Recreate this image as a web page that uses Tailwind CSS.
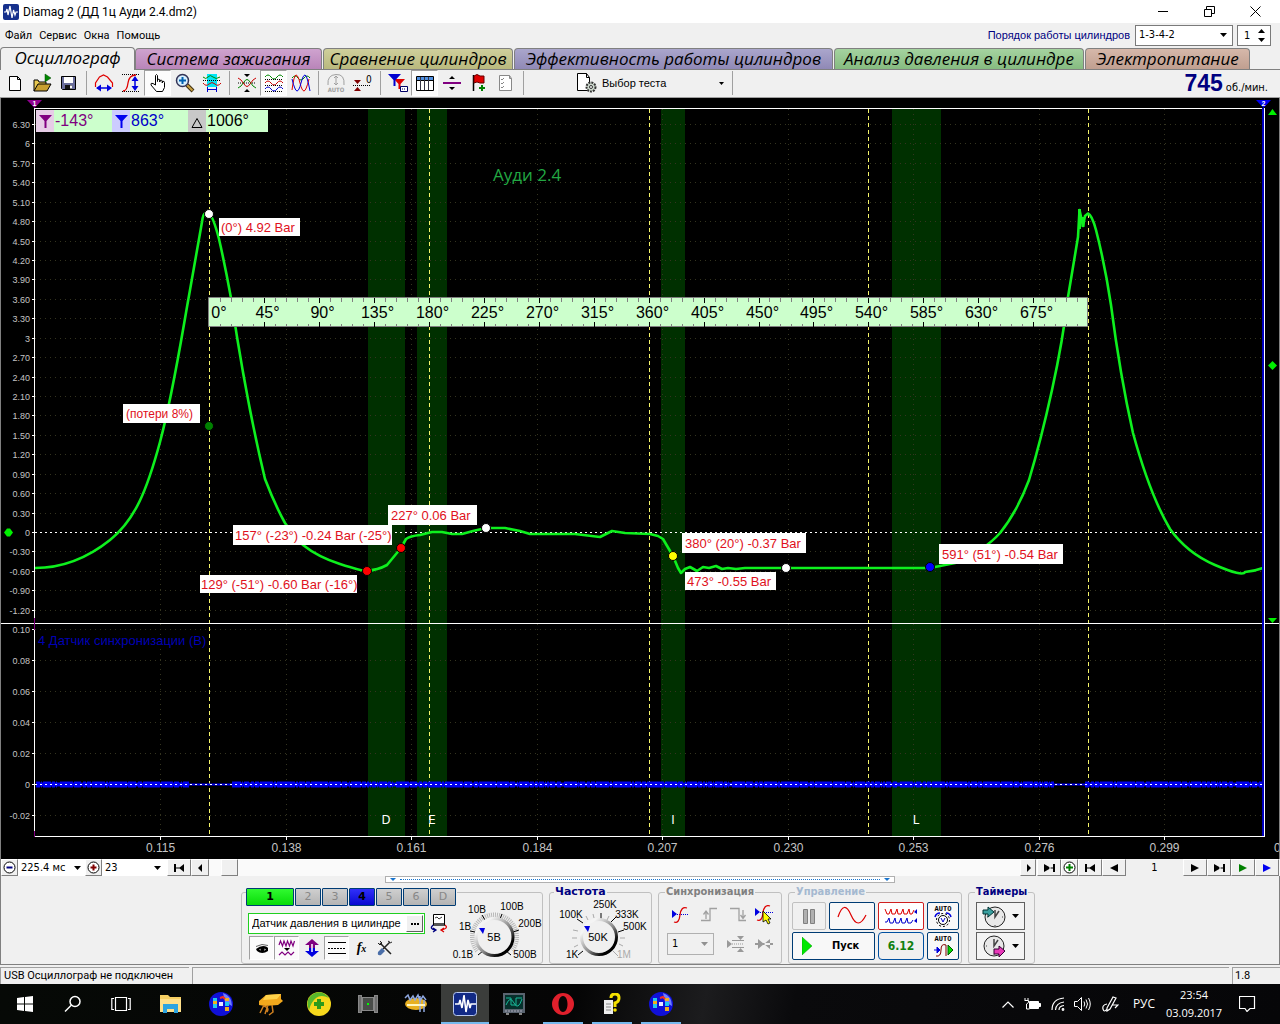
<!DOCTYPE html>
<html lang="ru">
<head>
<meta charset="utf-8">
<title>Diamag 2</title>
<script src="https://cdn.jsdelivr.net/npm/@tailwindcss/browser@4"></script>
</head>
<body class="min-h-screen flex flex-col bg-[#f0f0f0] text-black text-[11px] font-['DejaVu_Sans_Condensed','DejaVu_Sans',sans-serif] overflow-x-hidden">

<!-- title bar -->
<header class="flex items-center h-[23px] bg-white pl-[3px] font-['Roboto',sans-serif]">
  <svg class="w-4 h-4 shrink-0" viewBox="0 0 16 16"><rect width="16" height="16" rx="2" fill="#16308c"/><path d="M1 8h2l1-3 1 6 2-9 2 12 1.500-8 1.500 5 1-3h2" fill="none" stroke="#fff" stroke-width="1.200"/></svg>
  <h1 class="ml-1 text-xs leading-4">Diamag 2 (ДД 1ц Ауди 2.4.dm2)</h1>
  <div class="ml-auto mr-0.5 flex">
    <button class="w-[46px] h-[22px] grid place-items-center" aria-label="Свернуть"><svg width="11" height="11" viewBox="0 0 11 11"><path d="M0 5.500h10" stroke="#000"/></svg></button>
    <button class="w-[46px] h-[22px] grid place-items-center" aria-label="Развернуть"><svg width="11" height="11" viewBox="0 0 11 11" fill="none" stroke="#000"><path d="M.5 3.500h7v7h-7zM2.500 3V.5h8v7H8"/></svg></button>
    <button class="w-[46px] h-[22px] grid place-items-center" aria-label="Закрыть"><svg width="11" height="11" viewBox="0 0 11 11"><path d="M.5.5l10 10M10.500.5l-10 10" stroke="#000"/></svg></button>
  </div>
</header>

<!-- menu -->
<div class="flex items-center h-6">
  <nav class="flex gap-[7px] pl-[5px] pt-0.5 font-['Roboto',sans-serif] text-[11px] leading-4">
    <a href="#">Файл</a><a href="#">Сервис</a><a href="#">Окна</a><a href="#">Помощь</a>
  </nav>
  <div class="ml-auto flex items-center pr-[9px]">
    <label for="order" class="text-[#000080] mr-[5px] font-['Liberation_Sans',sans-serif]">Порядок работы цилиндров</label>
    <div class="relative mr-1">
      <select id="order" class="appearance-none block w-[98px] h-[21px] bg-white border border-[#7a7a7a] pl-[3px] text-[11px]"><option>1-3-4-2</option></select>
      <svg class="absolute right-1.5 top-2 pointer-events-none" width="7" height="4" viewBox="0 0 7 4"><path d="M0 0h7L3.500 4z"/></svg>
    </div>
    <div class="relative">
      <input aria-label="Цилиндр" value="1" class="block w-[34px] h-[21px] bg-white border border-[#7a7a7a] pl-1.5 text-[11px]">
      <svg class="absolute right-1.5 top-1 pointer-events-none" width="7" height="13" viewBox="0 0 7 13"><path d="M0 4h7L3.500 0zM0 9h7L3.500 13z"/></svg>
    </div>
  </div>
</div>

<!-- mode tabs -->
<nav class="flex h-[23px] items-end border-b border-[#808080] font-['Open_Sans',sans-serif] italic text-[17px] leading-[20px] whitespace-nowrap text-center">
  <a href="#" class="w-[135px] h-[23px] -mb-px bg-[#f0f0f0] border border-b-0 border-[#808080] rounded-t-[4px]">Осциллограф</a>
  <a href="#" class="w-[187px] h-[21px] bg-[linear-gradient(#cfa3cf,#b985b9)] border border-b-0 border-[#808080] rounded-t-[4px]">Система зажигания</a>
  <a href="#" class="w-[190px] ml-px h-[21px] bg-[linear-gradient(#cfcf9c,#b9b97e)] border border-b-0 border-[#808080] rounded-t-[4px]">Сравнение цилиндров</a>
  <a href="#" class="w-[319px] ml-px h-[21px] bg-[linear-gradient(#aaa6cc,#9089b6)] border border-b-0 border-[#808080] rounded-t-[4px]">Эффективность работы цилиндров</a>
  <a href="#" class="w-[250px] ml-px h-[21px] bg-[linear-gradient(#a5d3a0,#86bb80)] border border-b-0 border-[#808080] rounded-t-[4px]">Анализ давления в цилиндре</a>
  <a href="#" class="w-[165px] ml-px h-[21px] bg-[linear-gradient(#d6b8aa,#c09f90)] border border-b-0 border-[#808080] rounded-t-[4px]">Электропитание</a>
</nav>

<!-- toolbar -->
<div class="flex items-start h-7 pl-px border-b border-[#a0a0a0]">
  <button class="w-[27px] h-[26px] grid place-items-center" aria-label="Новый"><svg width="20" height="20" viewBox="0 0 20 20"><path d="M4.500 3.500h8l3 3v11h-11zM12.500 3.500v3h3" fill="#fff" stroke="#000"/></svg></button>
  <button class="w-[27px] h-[26px] grid place-items-center" aria-label="Открыть"><svg width="20" height="20" viewBox="0 0 20 20"><path d="M2 18V7h4l1 2h7v3" fill="#e8c850" stroke="#000"/><path d="M2 18l4-7h13l-4 7z" fill="#c8a030" stroke="#000"/><path d="M13 1l6 4-6 4z" fill="#080" stroke="#040" stroke-width=".5"/></svg></button>
  <button class="w-[27px] h-[26px] grid place-items-center" aria-label="Сохранить"><svg width="20" height="20" viewBox="0 0 20 20"><path d="M2.500 3.500h14v13h-13l-1-1z" fill="#6a6e9c" stroke="#000"/><path d="M5 4h9v6H5z" fill="#fff"/><path d="M6 12h7v4H6z" fill="#111"/><path d="M11 12.500h2v3h-2z" fill="#fff"/></svg></button>
  <span class="w-2 h-[26px] grid place-items-center"><i class="block w-px h-6 bg-[#a0a0a0]"></i></span>
  <button class="w-[27px] h-[26px] grid place-items-center" aria-label="Период"><svg width="20" height="20" viewBox="0 0 20 20"><path d="M1.500 14V10l4-6 4-2 4 2 5 6v4" fill="none" stroke="#e00000" stroke-width="1.200"/><path d="M3 15h14" stroke="#0000e0" stroke-width="1.500"/><path d="M2 15l5-3.500v7zM18 15l-5-3.500v7z" fill="#0000e0"/></svg></button>
  <button class="w-[27px] h-[26px] grid place-items-center" aria-label="Амплитуда"><svg width="20" height="20" viewBox="0 0 20 20"><path d="M1 1.500h17M1 18.500h17" stroke="#000" stroke-dasharray="1 1"/><path d="M2 18q4 0 5-8t8-8" fill="none" stroke="#e00000" stroke-width="1.300"/><path d="M14 5v10" stroke="#0000e0" stroke-width="1.500"/><path d="M14 3l3.500 5h-7zM14 18l3.500-5h-7z" fill="#0000e0"/></svg></button>
  <button class="w-[27px] h-[26px] grid place-items-center bg-white/80 border border-t-[#a0a0a0] border-l-[#a0a0a0] border-r-white border-b-white" aria-label="Рука"><svg width="20" height="20" viewBox="0 0 20 20"><path d="M7.500 12V2.500q1-2 2 0v6V6.500q1.800-1 2.300.5v2V7.500q2-1 2.500.5v2-1.500q2.200-.8 2.200 1v5l-2 4h-6L3 12q-.5-2.500 2-1.500z" fill="#fff" stroke="#000"/></svg></button>
  <button class="w-[27px] h-[26px] grid place-items-center" aria-label="Лупа"><svg width="20" height="20" viewBox="0 0 20 20"><path d="M12 12l6 6" stroke="#403010" stroke-width="4"/><path d="M12 12l5.500 5.500" stroke="#c8a040" stroke-width="2"/><circle cx="7.500" cy="7.500" r="6" fill="#d8f0ff" stroke="#335" stroke-width="1.500"/><path d="M4 7.500h7M7.500 4v7" stroke="#0060b0" stroke-width="2"/></svg></button>
  <button class="w-[27px] h-[26px] grid place-items-center" aria-label="Выделение"><svg width="20" height="20" viewBox="0 0 20 20"><path d="M5 1h10v13H5z" fill="#00e5f5"/><path d="M1 4q3 3 5 0t5 0 7 0" fill="none" stroke="#080"/><path d="M1 7.500h18" stroke="#000" stroke-dasharray="1 1"/><path d="M1 10q3 4 6 1t6 0 6-1" fill="none" stroke="#c00"/><path d="M5.500 14v5M14.500 14v5M6 16.500h8" stroke="#00c" /></svg></button>
  <span class="w-2 h-[26px] grid place-items-center"><i class="block w-px h-6 bg-[#a0a0a0]"></i></span>
  <button class="w-[27px] h-[26px] grid place-items-center" aria-label="Совместить"><svg width="20" height="20" viewBox="0 0 20 20"><path d="M7 1h6l-3 3zM7 19h6l-3-3z"/><path d="M1 10h18" stroke="#000" stroke-dasharray="1 1"/><path d="M1 15q3-1 6-6t6 0 6 6" fill="none" stroke="#080"/><path d="M1 5q3 1 6 6t6 0 6-6" fill="none" stroke="#c00"/></svg></button>
  <button class="w-[27px] h-[26px] grid place-items-center bg-white/80 border border-t-[#a0a0a0] border-l-[#a0a0a0] border-r-white border-b-white" aria-label="Разнести"><svg width="20" height="20" viewBox="0 0 20 20" fill="none"><path d="M1 4q3-4 6 0t6 0 6 0" stroke="#080"/><path d="M1 6.500h18M1 12.500h18M1 18.500h18" stroke="#000" stroke-dasharray="1 1"/><path d="M1 10q3-4 6 0t6 0 6 0" stroke="#c00"/><path d="M1 16q3-4 6 0t6 0 6 0" stroke="#00c"/></svg></button>
  <button class="w-[27px] h-[26px] grid place-items-center" aria-label="Наложить"><svg width="20" height="20" viewBox="0 0 20 20" fill="none"><path d="M1 5q3-4 6 0t6 0 6 0" stroke="#080"/><path d="M1 17Q3 2 5 2t4 8 4 8 5-12" stroke="#e00000"/><path d="M1 6q3 12 5 12t4-8 4-8 5 16" stroke="#0000e0"/></svg></button>
  <span class="w-2 h-[26px] grid place-items-center"><i class="block w-px h-6 bg-[#a0a0a0]"></i></span>
  <button class="w-[27px] h-[26px] grid place-items-center" aria-label="Авто"><svg width="20" height="20" viewBox="0 0 20 20" fill="none" stroke="#a0a0a0"><path d="M2 12q-1-10 8-10.500T18 12M10 3v9M8 5l2-2 2 2M8 10l2 2 2-2"/><text x="10" y="19" font-size="6" font-weight="bold" text-anchor="middle" fill="#a0a0a0" stroke="none">AUTO</text></svg></button>
  <button class="w-[27px] h-[26px] grid place-items-center" aria-label="Обнулить"><svg width="20" height="20" viewBox="0 0 20 20"><path d="M1 7h7l-3.500 4zM1 18h7l-3.500-4z" fill="#800000"/><path d="M0 12.500h18" stroke="#000" stroke-dasharray="1 1"/><text x="13" y="10" font-size="10">0</text></svg></button>
  <span class="w-2 h-[26px] grid place-items-center"><i class="block w-px h-6 bg-[#a0a0a0]"></i></span>
  <button class="w-[27px] h-[26px] grid place-items-center" aria-label="Маркеры"><svg width="20" height="20" viewBox="0 0 20 20"><path d="M6 6h11l-4.500 5v5h-2v-5z" fill="#e00000"/><path d="M0 1h13L7.500 7v6h-2V7z" fill="#0000d0"/><path d="M12.500 13.500h7v5h-7z" fill="#fff" stroke="#006"/><path d="M14 16h1m1 0h1" stroke="#006"/></svg></button>
  <button class="w-[27px] h-[26px] grid place-items-center bg-white/80 border border-t-[#a0a0a0] border-l-[#a0a0a0] border-r-white border-b-white" aria-label="Таблица"><svg width="20" height="20" viewBox="0 0 20 20"><path d="M1.500 3.500h17v14h-17z" fill="#fff" stroke="#000"/><path d="M2 4h16v3H2z" fill="#5090e0"/><path d="M2 7.500h16" stroke="#000"/><path d="M5.500 4v13M9.500 4v13M13.500 4v13" stroke="#334"/></svg></button>
  <button class="w-[27px] h-[26px] grid place-items-center" aria-label="Уровень"><svg width="20" height="20" viewBox="0 0 20 20"><path d="M7 6h6l-3-3zM7 14h6l-3 3z"/><path d="M1 10h18" stroke="#800080" stroke-width="2"/></svg></button>
  <button class="w-[27px] h-[26px] grid place-items-center" aria-label="Флаг"><svg width="20" height="20" viewBox="0 0 20 20"><path d="M4.500 2v16" stroke="#000" stroke-width="1.500"/><path d="M5 3q3-3 6 0h4v7h-4q-3-2-6 0z" fill="#e00000" stroke="#600"/><path d="M13 12v6M10 15h6" stroke="#008000" stroke-width="2"/></svg></button>
  <button class="w-[27px] h-[26px] grid place-items-center" aria-label="Отчёт"><svg width="20" height="20" viewBox="0 0 20 20"><path d="M3.500 2.500h10l2 3v12h-12zM13.500 2.500v3h2" fill="#fff" stroke="#888"/><path d="M5 6l1 1 2-2M5 10l1 1 2-2M5 14l1 1 2-2" fill="none" stroke="#888"/></svg></button>
  <span class="w-2 h-[26px] grid place-items-center"><i class="block w-px h-6 bg-[#a0a0a0]"></i></span>
  <button class="flex items-center ml-[49px] w-[152px] h-[26px] text-[11px] font-['Liberation_Sans',sans-serif]"><svg width="22" height="20" viewBox="0 0 22 20"><path d="M1.500.5h9l3 4v13h-12z" fill="#fff" stroke="#000"/><path d="M10.500.5v4h3" fill="none" stroke="#000"/><circle cx="15" cy="14" r="4.500" fill="#cdd8cd" stroke="#333" stroke-width="2" stroke-dasharray="2 1"/><circle cx="15" cy="14" r="1.500" fill="#fff" stroke="#333"/></svg><span class="ml-1">Выбор теста</span><svg class="ml-auto mr-1" width="5" height="3" viewBox="0 0 5 3"><path d="M0 0h5L2.500 3z"/></svg></button>
  <i class="block w-px h-6 mt-px bg-[#a0a0a0] ml-1"></i>
  <div class="ml-auto mr-3 flex items-baseline gap-[3px]"><b class="text-[#000080] text-[23px] leading-[26px] font-['Liberation_Sans',sans-serif]">745</b><span>об./мин.</span></div>
</div>

<!-- oscilloscope canvas -->
<main>
<svg id="scope" class="block w-full h-auto bg-black" viewBox="0 98 1280 761" font-family="Liberation Sans, Arial, sans-serif">
  <g fill="#003000"><path d="M368 109h37v727h-37zM417 109h30v727h-30zM661 109h24v727h-24zM892 109h49v727h-49z"/></g>
  <g id="grid" stroke="#34341f" stroke-dasharray="1 4"></g>
  <g id="axis" fill="#c4c4c4" stroke="none"></g>
  <g stroke="#f4f46a" stroke-dasharray="4 3"><path d="M209.500 109v727M429.500 109v727M649.500 109v727M868.500 109v727M1088.500 109v727"/></g>
  <path id="noise" fill="none" stroke="#0000f0" stroke-width="1"/>
  <path d="M35 532.500h1229M35 784.500h1229" stroke="#fff" stroke-dasharray="2 3"/>
  <path d="M35 568C60 568 85 560 110 540S147 490 160 442S181 340 190 290L202 222Q203 214 205 213.500H209Q213 216 219 239Q225 265 231 298Q246 400 265 479Q275 505 285 523Q295 538 303 545Q318 557 340 564T366 571Q378 570 387 565L401 548L406 539Q410 536 420 535L432 532H442L452 534H462L473 531L486 528L505 528L520 531L530 534H575L600 537L612 531L625 533L650 534L658 536L663 539L673 556L678 568L681 573L685 569L690 567L697 571L703 567L709 568L716 566L722 569L728 568L736 569L745 568H830H930L955 563Q985 550 1000 533Q1017 512 1029 480Q1041 440 1052 390T1068 297L1078 237L1079.500 210L1083 226L1085 216L1088 213.500Q1092 215 1096 230Q1105 265 1111 305Q1120 375 1133 433Q1150 495 1170 529Q1187 553 1215 565T1245 572Q1255 571 1263 568" fill="none" stroke="#0ef01e" stroke-width="2.600" stroke-linejoin="round"/>
  <path d="M1079.500 209v20M1083 217v10" stroke="#0ef01e" stroke-width="3"/>
  <path d="M34.500 108v728M34 108.500h1230M34 836.500h1230M0 623.500h1280" stroke="#fff"/>
  <path d="M34.500 618v12M34.500 831v6" stroke="#800080"/>
  <path d="M1263 108v728" stroke="#0000c0" stroke-width="2"/><path d="M1264.500 108v729" stroke="#fff" stroke-width="1"/>
  <path d="M.5 98v761M1279.500 98v761" stroke="#808080"/>
  <path d="M27 100h15l-7.500 8z" fill="#900090"/><path d="M1256 100h15l-7.500 8z" fill="#0000f0"/>
  <text x="34.500" y="106" font-size="7" font-weight="bold" fill="#fff" text-anchor="middle">1</text><text x="1263.500" y="106" font-size="7" font-weight="bold" fill="#fff" text-anchor="middle">2</text>
  <path d="M1268 115h9l-4.500-6zM1268 618h9l-4.500 5zM1268 365.500l4.500-4.500 4.500 4.500-4.500 4.500zM4 532.500l3-4h3l3 4-3 4H7z" fill="#00f000"/>

  <!-- cursor read-outs -->
  <path d="M36 110h232v22H36z" fill="#ccffcc"/><path d="M36 110h18v22H36z" fill="#e6cde6"/><path d="M112 110h18v22h-18z" fill="#ccccff"/><path d="M188 110h18v22h-18z" fill="#c8c8c8"/>
  <path d="M39 115h13l-5.500 6v7h-2v-7z" fill="#800080"/><path d="M115 115h13l-5.500 6v7h-2v-7z" fill="#0000f0"/><path d="M192 127.500h10l-5-9z" fill="none" stroke="#000"/>
  <g font-size="16"><text x="55" y="126" fill="#800080">-143°</text><text x="131" y="126" fill="#0000c8">863°</text><text x="207" y="126">1006°</text></g>
  <text x="493" y="181" font-size="17" fill="#22a843" font-family="Open Sans, sans-serif">Ауди 2.4</text>
  <text x="38" y="645" font-size="13" fill="#0000b4">4 Датчик синхронизации (В)</text>

  <g id="ruler"><path d="M208.500 297.500h879v29h-879z" fill="#ccffcc" stroke="#808080"/></g>

  <!-- measured points -->
  <g fill="#fff"><path d="M219 218h81v18h-81zM123 404h77v19h-77zM388 505h89v20h-89zM233 525h159v20H233zM200 575h157v18H200zM682 533h124v20H682zM685 572h91v18h-91zM939 544h124v20H939z"/></g>
  <g font-size="13" fill="#e01020"><text x="221" y="232">(0°) 4.92 Bar</text><text x="126" y="418" font-size="12">(потери 8%)</text><text x="391" y="520">227° 0.06 Bar</text><text x="235" y="540">157° (-23°) -0.24 Bar (-25°)</text><text x="201" y="589">129° (-51°) -0.60 Bar (-16°)</text><text x="685" y="548">380° (20°) -0.37 Bar</text><text x="687" y="586">473° -0.55 Bar</text><text x="942" y="559">591° (51°) -0.54 Bar</text></g>
  <g stroke="#000"><circle cx="209" cy="214" r="4.500" fill="#fff"/><circle cx="209" cy="426" r="4.500" fill="#008000"/><circle cx="486" cy="528" r="4.500" fill="#fff"/><circle cx="401" cy="548" r="4.500" fill="#f00"/><circle cx="367" cy="571" r="4.500" fill="#f00"/><circle cx="673" cy="556" r="4.500" fill="#ff0"/><circle cx="786" cy="568" r="4.500" fill="#fff"/><circle cx="930" cy="567" r="4.500" fill="#00f"/></g>
  <g font-size="13" fill="#fff" text-anchor="middle" font-family="DejaVu Sans Condensed, sans-serif"><text x="386" y="824">D</text><text x="432" y="824">E</text><text x="673" y="824">I</text><text x="916" y="824">L</text></g>
</svg>
</main>

<!-- time scrolling -->
<div class="flex h-[17px] items-stretch border-l border-[#808080] bg-[#f8f8f8]">
  <button class="w-[17px] grid place-items-center bg-[#f0f0f0] border border-white border-r-[#808080] border-b-[#808080]" aria-label="Уменьшить"><svg width="13" height="13" viewBox="0 0 13 13"><circle cx="6.500" cy="6.500" r="5.500" fill="#fff" stroke="#000"/><path d="M3.500 6.500h6" stroke="#000080" stroke-width="2"/></svg></button>
  <div class="relative"><select aria-label="Развёртка" class="appearance-none block w-[67px] h-[17px] bg-white pl-[3px] text-[11px] leading-4"><option>225.4 мс</option></select><svg class="absolute right-1 top-[7px] pointer-events-none" width="7" height="4" viewBox="0 0 7 4"><path d="M0 0h7L3.500 4z"/></svg></div>
  <button class="w-[17px] grid place-items-center bg-[#f0f0f0] border border-white border-r-[#808080] border-b-[#808080]" aria-label="Увеличить"><svg width="13" height="13" viewBox="0 0 13 13"><circle cx="6.500" cy="6.500" r="5.500" fill="#fff" stroke="#000"/><path d="M3.500 6.500h6M6.500 3.500v6" stroke="#800000" stroke-width="2"/></svg></button>
  <div class="relative"><select aria-label="Масштаб" class="appearance-none block w-[65px] h-[17px] bg-white pl-[3px] text-[11px] leading-4"><option>23</option></select><svg class="absolute right-1.5 top-[7px] pointer-events-none" width="7" height="4" viewBox="0 0 7 4"><path d="M0 0h7L3.500 4z"/></svg></div>
  <button class="w-6 grid place-items-center bg-[#f0f0f0] border border-white border-r-[#808080] border-b-[#808080]" aria-label="В начало"><svg width="11" height="8" viewBox="0 0 11 8"><path d="M0 0h2v8H0zM10 0v8L5 4zM2 3.500h4v1H2z"/></svg></button>
  <button class="w-[18px] grid place-items-center bg-[#f0f0f0] border border-white border-r-[#808080] border-b-[#808080]" aria-label="Назад"><svg width="5" height="8" viewBox="0 0 5 8"><path d="M4 0v8L0 4z"/></svg></button>
  <div class="flex-1 bg-[#fafafa] pl-3"><div class="w-[17px] h-[17px] bg-[#f0f0f0] border border-white border-r-[#808080] border-b-[#808080]"></div></div>
  <button class="w-4 grid place-items-center bg-[#f0f0f0] border border-white border-r-[#808080] border-b-[#808080]" aria-label="Вперёд"><svg width="5" height="8" viewBox="0 0 5 8"><path d="M1 0v8l4-4z"/></svg></button>
  <button class="w-6 ml-px grid place-items-center bg-[#f0f0f0] border border-white border-r-[#808080] border-b-[#808080]" aria-label="В конец"><svg width="11" height="8" viewBox="0 0 11 8"><path d="M9 0h2v8H9zM0 0v8l7-4zM5 3.500h4v1H5z"/></svg></button>
  <button class="w-[17px] grid place-items-center bg-[#f0f0f0] border border-white border-r-[#808080] border-b-[#808080]" aria-label="Добавить кадр"><svg width="13" height="13" viewBox="0 0 13 13"><circle cx="6.500" cy="6.500" r="5.500" fill="#fff" stroke="#000"/><path d="M3 6.500h7M6.500 3v7" stroke="#008000" stroke-width="2"/></svg></button>
  <button class="w-6 grid place-items-center bg-[#f0f0f0] border border-white border-r-[#808080] border-b-[#808080]" aria-label="Первый кадр"><svg width="11" height="8" viewBox="0 0 11 8"><path d="M0 0h2v8H0zM10 0v8L4 4zM2 3.500h4v1H2z"/></svg></button>
  <button class="w-6 grid place-items-center bg-[#f0f0f0] border border-white border-r-[#808080] border-b-[#808080]" aria-label="Предыдущий кадр"><svg width="8" height="8" viewBox="0 0 8 8"><path d="M8 0v8L0 4z"/></svg></button>
  <span class="w-[57px] bg-[#f0f0f0] text-center leading-[17px]">1</span>
  <button class="w-6 grid place-items-center bg-[#f0f0f0] border border-white border-r-[#808080] border-b-[#808080]" aria-label="Следующий кадр"><svg width="8" height="8" viewBox="0 0 8 8"><path d="M0 0v8l8-4z"/></svg></button>
  <button class="w-6 grid place-items-center bg-[#f0f0f0] border border-white border-r-[#808080] border-b-[#808080]" aria-label="Последний кадр"><svg width="11" height="8" viewBox="0 0 11 8"><path d="M9 0h2v8H9zM0 0v8l7-4zM5 3.500h4v1H5z"/></svg></button>
  <button class="w-6 grid place-items-center bg-[#f0f0f0] border border-white border-r-[#808080] border-b-[#808080]" aria-label="Воспроизвести"><svg width="8" height="8" viewBox="0 0 8 8"><path d="M0 0v8l8-4z" fill="#008000"/></svg></button>
  <button class="w-6 mr-px grid place-items-center bg-[#f0f0f0] border border-white border-r-[#808080] border-b-[#808080]" aria-label="Воспроизвести дальше"><svg width="8" height="8" viewBox="0 0 8 8"><path d="M0 0v8l8-4z" fill="#0000f0"/></svg></button>
</div>

<!-- control panel -->
<section class="border-x border-b border-[#808080] h-[89px] flex flex-col items-center">
  <div class="w-[510px] h-[7px] shrink-0 flex items-center justify-between px-1 border border-[#b0b0b0] bg-white">
    <svg width="6" height="3" viewBox="0 0 6 3"><path d="M0 0h6L3 3z" fill="#1874cd"/></svg><i class="block flex-1 mx-1 border-t border-dotted border-[#1874cd]"></i><svg width="6" height="3" viewBox="0 0 6 3"><path d="M0 0h6L3 3z" fill="#1874cd"/></svg>
  </div>
  <div class="flex gap-[6px] items-end pt-0.5 pr-1">

    <div class="w-[302px] h-[72px] border border-[#c0c0c0] rounded-[3px] flex">
      <div class="w-[210px] -mt-[5px] ml-1 shrink-0">
        <div class="flex gap-px w-[211px] bg-[#f0f0f0] font-['DejaVu_Sans',sans-serif]">
          <button class="w-12 h-[18px] border border-[#003c74] rounded-[1px] bg-[linear-gradient(#30fa30,#08dc08)] font-bold leading-4">1</button>
          <button class="w-[26px] h-[18px] border border-[#003c74] rounded-[1px] bg-[linear-gradient(#cfcfcf,#b4b4b4)] text-[#888] leading-4">2</button>
          <button class="w-[26px] h-[18px] border border-[#003c74] rounded-[1px] bg-[linear-gradient(#cfcfcf,#b4b4b4)] text-[#888] leading-4">3</button>
          <button class="w-[26px] h-[18px] border border-[#003c74] rounded-[1px] bg-[linear-gradient(#3030fa,#0808d0)] font-bold leading-4">4</button>
          <button class="w-[26px] h-[18px] border border-[#003c74] rounded-[1px] bg-[linear-gradient(#cfcfcf,#b4b4b4)] text-[#888] leading-4">5</button>
          <button class="w-[26px] h-[18px] border border-[#003c74] rounded-[1px] bg-[linear-gradient(#cfcfcf,#b4b4b4)] text-[#888] leading-4">6</button>
          <button class="w-[26px] h-[18px] border border-[#003c74] rounded-[1px] bg-[linear-gradient(#cfcfcf,#b4b4b4)] text-[#888] leading-4">D</button>
        </div>
        <div class="flex items-center mt-[7px] ml-0.5 gap-[5px]">
          <div class="flex w-[177px] h-[21px] border border-[#20d020] bg-white">
            <input aria-label="Датчик" value="Датчик давления в цилиндре" class="flex-1 min-w-0 pl-[3px] text-[11px] font-['Liberation_Sans',sans-serif]">
            <button class="w-[17px] h-[17px] m-px grid place-items-center bg-[#f0f0f0] border border-white border-r-[#606060] border-b-[#606060]" aria-label="Выбрать датчик"><svg width="8" height="2" viewBox="0 0 8 2"><path d="M0 0h2v2H0zM3 0h2v2H3zM6 0h2v2H6z"/></svg></button>
          </div>
          <button aria-label="Сменить"><svg width="18" height="20" viewBox="0 0 18 20"><path d="M3.500.5h11v11h-11z" fill="#fff" stroke="#000"/><path d="M5 4l2-1 2 2 3-2" fill="none" stroke="#333"/><path d="M4 9h10v3H4z" fill="#555"/><path d="M3 11q-4 4 2 5M3 14l3 2-3 2" fill="none" stroke="#000080" stroke-width="1.300"/><path d="M15 11q4 3-3 5M14 14l-3 2 3 2" fill="none" stroke="#d00" stroke-width="1.300"/></svg></button>
        </div>
        <div class="flex mt-0.5 ml-[3px]">
          <button class="w-[25px] h-6 grid place-items-center bg-white/70 border border-t-[#a0a0a0] border-l-[#a0a0a0] border-r-white border-b-white" aria-label="Показать"><svg width="16" height="16" viewBox="0 0 16 16"><path d="M2 9q6-5 11-2l1 1v3q-6 4-11 0z"/><path d="M5 9.500q4-2 7 0-3 2.500-7 0z" fill="#fff"/><circle cx="8.500" cy="9.500" r="2"/><path d="M2 6.500q6-3.500 12-1" fill="none" stroke="#666"/></svg></button>
          <button class="w-[25px] h-6 grid place-items-center bg-white/70 border border-t-[#a0a0a0] border-l-[#a0a0a0] border-r-white border-b-white" aria-label="Фильтр"><svg width="18" height="18" viewBox="0 0 18 18" fill="none" stroke="#800080" stroke-width="1.200"><path d="M1 6l1.500-4 2 5 1.500-5 2 5 1.500-5 2 5 1.500-5 2 5 1.500-5M1 16l3-3 3 3 3-3 3 3 3-3"/><path d="M6 9h6l-3 3z" fill="#000" stroke="none"/></svg></button>
          <button class="w-[25px] h-6 grid place-items-center" aria-label="Сдвиг"><svg width="16" height="18" viewBox="0 0 16 18"><path d="M8 0l7 6h-4v3H5V6H1z" fill="#800080"/><path d="M8 18l7-6h-4V9H5v3H1z" fill="#0000e0"/><path d="M8 5v8" stroke="#fff" stroke-width="1.500"/></svg></button>
          <button class="w-[25px] h-6 grid place-items-center bg-white/70 border border-t-[#a0a0a0] border-l-[#a0a0a0] border-r-white border-b-white" aria-label="Линии"><svg width="18" height="16" viewBox="0 0 18 16"><path d="M0 2.500h18M0 13.500h18" stroke="#000"/><path d="M0 8.500h18" stroke="#000" stroke-dasharray="2 1"/></svg></button>
          <button class="w-[25px] h-6 font-['Liberation_Serif',serif] italic font-bold text-sm leading-4" aria-label="Функция">f<span class="text-[10px]">x</span></button>
          <button class="w-[22px] h-6 grid place-items-center" aria-label="Настройки"><svg width="16" height="16" viewBox="0 0 16 16"><path d="M3 3l11 11M13 2L6 9" stroke="#222" stroke-width="1.500"/><path d="M1 3l2 2 2-2-2-2M11 1q3 3 4 1" fill="none" stroke="#222"/><path d="M1 12l4-4 3 3-4 4q-4 1-3-3z" fill="#4a6ea8"/></svg></button>
        </div>
      </div>
      <svg width="86" height="70" viewBox="456 893 86 70" class="overflow-visible" font-family="Liberation Sans, sans-serif" font-size="10">
        <defs><linearGradient id="ring" x1="0" y1="0" x2="1" y2="1"><stop offset=".2" stop-color="#f4f4f4"/><stop offset=".55" stop-color="#888"/><stop offset=".8" stop-color="#000"/></linearGradient></defs>
        <circle cx="494.500" cy="937" r="22" fill="none" stroke="#b8b8b8" stroke-width="5" stroke-dasharray="1 1" pathLength="138"/>
        <path d="M476 952l14-12 9 0 15 12v10h-38z" fill="#f0f0f0"/>
        <path d="M483 951l-5 4M506 951l5 4M475 932l-5-1M485 920l-3-5M500 919l2-5M513 932l6-2" stroke="#000"/>
        <circle cx="494.500" cy="937" r="18.500" fill="#f0f0f0" stroke="url(#ring)" stroke-width="3"/>
        <path d="M479 928h6l-2 6z" fill="#0000e0"/>
        <text x="494" y="941" text-anchor="middle" font-size="11">5В</text>
        <g text-anchor="middle"><text x="477" y="913">10В</text><text x="512" y="910">100В</text><text x="465" y="930">1В</text><text x="530" y="927">200В</text><text x="463" y="958">0.1В</text><text x="525" y="958">500В</text></g>
      </svg>
    </div>

    <fieldset class="w-[103px] h-[79px] border border-[#c0c0c0] rounded-[3px] min-w-0">
      <legend class="ml-1 px-px leading-[14px] font-bold text-[#000080] font-['DejaVu_Sans',sans-serif]">Частота</legend>
      <svg width="101" height="63" viewBox="550 899 101 63" class="overflow-visible" font-family="Liberation Sans, sans-serif" font-size="10">
        <path d="M583 951l-5 4M583 923l-6-4M601 919v-6M611 922l5-5M618 932l6-2" stroke="#000"/>
        <path d="M578 945l-4 2M577 938h-5M578 931l-5-1M588 920l-2-4M594 918l-1-4M607 920l2-4M620 938h5M619 944l4 2M613 951l5 5" stroke="#aaa"/>
        <circle cx="599" cy="937" r="17.500" fill="#f0f0f0" stroke="url(#ring)" stroke-width="3"/>
        <path d="M584 926h6l-2 6z" fill="#0000e0"/>
        <text x="598" y="941" text-anchor="middle" font-size="11">50K</text>
        <g text-anchor="middle"><text x="605" y="908">250K</text><text x="571" y="918">100K</text><text x="627" y="918">333K</text><text x="635" y="930">500K</text><text x="572" y="958">1K</text><text x="624" y="958" fill="#aaa">1M</text></g>
      </svg>
    </fieldset>

    <fieldset class="w-[124px] h-[79px] border border-[#c0c0c0] rounded-[3px] min-w-0">
      <legend class="ml-1.5 px-px leading-[14px] font-bold text-[#808080]">Синхронизация</legend>
      <div class="flex pl-1.5 pt-1">
        <button class="w-[29px] h-6 grid place-items-center" aria-label="Уровень синхронизации"><svg width="18" height="18" viewBox="0 0 18 18" fill="none"><path d="M1 4l5 4-5 4z" fill="#0000e0"/><path d="M6 8.500h11" stroke="#0000e0" stroke-dasharray="1 1"/><path d="M3 16q5 2 6-7t7-7" stroke="#d00" stroke-width="1.300"/></svg></button>
        <button class="w-[29px] h-6 grid place-items-center" aria-label="Фронт"><svg width="18" height="18" viewBox="0 0 18 18" fill="none" stroke="#a0a0a0" stroke-width="1.300"><path d="M1 14.500h9v-12h7M6 13V6M3.500 8.500L6 5l2.500 3.500"/></svg></button>
        <button class="w-[29px] h-6 grid place-items-center" aria-label="Спад"><svg width="18" height="18" viewBox="0 0 18 18" fill="none" stroke="#a0a0a0" stroke-width="1.300"><path d="M1 2.500h9v12h7M14 4v7M11.500 9l2.500 3.500L16.500 9"/></svg></button>
        <button class="w-6 h-6 grid place-items-center" aria-label="Ручная"><svg width="20" height="20" viewBox="0 0 20 20" fill="none"><path d="M1 3l5 4-5 4z" fill="#0000e0"/><path d="M6 7.500h13" stroke="#0000e0" stroke-dasharray="1 1"/><path d="M3 15q5 2 6-7t7-7" stroke="#d00" stroke-width="1.300"/><path d="M9 6l8 8h-3l2 4-2 1-2-4-3 2z" fill="#ff0" stroke="#000" stroke-width=".8"/></svg></button>
      </div>
      <div class="flex pl-2 pt-1.5">
        <div class="relative"><select aria-label="Канал" disabled class="appearance-none block w-[47px] h-[22px] border border-[#b0b0b0] pl-1 text-[11px] text-black opacity-100"><option>1</option></select><svg class="absolute right-1.5 top-[9px] pointer-events-none" width="7" height="4" viewBox="0 0 7 4"><path d="M0 0h7L3.500 4z" fill="#909090"/></svg></div>
        <button class="w-6 h-[22px] ml-2.5 grid place-items-center" aria-label="Удержание"><svg width="18" height="16" viewBox="0 0 18 16"><path d="M0 4l5 4-5 4zM10 0h7l-3.500 4zM10 16h7l-3.500-4z" fill="#999"/><path d="M5 4.500h12M5 11.500h12" stroke="#999"/><path d="M5 8h12" stroke="#999" stroke-dasharray="1 1"/></svg></button>
        <button class="w-6 h-[22px] ml-1 grid place-items-center" aria-label="Сжать"><svg width="18" height="10" viewBox="0 0 18 10"><path d="M3 0l6 5-6 5zM15 0L9 5l6 5zM0 4h18v2H0z" fill="#999"/></svg></button>
      </div>
    </fieldset>

    <fieldset class="w-[174px] h-[79px] border border-[#c0c0c0] rounded-[3px] min-w-0">
      <legend class="ml-1.5 px-px leading-[14px] font-bold text-[#a5b9d0]">Управление</legend>
      <div class="grid grid-cols-[34px_46px_46px_32px] gap-x-[3px] gap-y-0.5 pl-[3px] pt-[3px] whitespace-nowrap">
        <button class="h-7 border border-[#c0c0c0] rounded-[2px] grid place-items-center" aria-label="Пауза"><svg width="12" height="15" viewBox="0 0 12 15"><path d="M.5.5h4v14h-4zM7.500.5h4v14h-4z" fill="#b0b0b0" stroke="#808080"/></svg></button>
        <button class="h-7 border border-[#003c74] rounded-[2px] bg-[#f8f8f8] grid place-items-center" aria-label="Синус"><svg width="30" height="20" viewBox="0 0 30 20"><path d="M1 11Q7-7 14 9T29 9" fill="none" stroke="#d00" stroke-width="1.200"/></svg></button>
        <button class="h-7 border border-[#d02020] rounded-[2px] bg-white grid place-items-center" aria-label="Поток"><svg width="34" height="20" viewBox="0 0 34 20" fill="none"><path d="M1 3l2 5h2l2-5 1 5h3l2-5 1 5h3l2-5 1 5h3l2-5 1 5h2l2-4" stroke="#d00"/><path d="M1 16h2l2-4 1 5h3l2-5 1 5h3l2-5 1 5h3l2-5 1 5h3l2-3" stroke="#00c"/><path d="M33 3v5l-3-2zM33 12v5l-3-2z" fill="#00c"/></svg></button>
        <button class="h-7 border border-[#003c74] rounded-[2px] bg-[#f8f8f8] grid place-items-center" aria-label="Авто вольт"><svg width="24" height="24" viewBox="0 0 24 24"><text x="12" y="7" font-size="7" font-weight="bold" text-anchor="middle" font-family="Liberation Mono">AUTO</text><circle cx="12" cy="16" r="6.500" fill="none" stroke="#000" stroke-dasharray="2 2"/><circle cx="12" cy="16" r="4.500" fill="#fff" stroke="#000"/><path d="M10 14l2 4 2-4" fill="none" stroke="#00c"/><path d="M4 13q1-4 5-4M20 13q-1-4-5-4" fill="none" stroke="#00d" stroke-width="1.500"/></svg></button>
        <button class="col-span-2 h-7 border border-[#003c74] rounded-[2px] bg-[#f8f8f8] flex items-center font-bold pl-[9px] gap-[20px]"><svg width="10" height="18" viewBox="0 0 10 18"><path d="M0 0v18l10-9z" fill="#00e800" stroke="#090" stroke-width=".5"/></svg>Пуск</button>
        <button class="h-7 border border-[#0050a0] rounded-[4px] font-bold text-[#108010] text-xs">6.12</button>
        <button class="h-7 border border-[#003c74] rounded-[2px] bg-[#f8f8f8] grid place-items-center" aria-label="Авто пуск"><svg width="24" height="24" viewBox="0 0 24 24"><text x="12" y="7" font-size="7" font-weight="bold" text-anchor="middle" font-family="Liberation Mono">AUTO</text><path d="M3 16h3M6 13l3 3-3 3z" fill="#00d" stroke="#00d"/><path d="M5 22q5 1 5-6t5-5v11" fill="none" stroke="#800000"/><path d="M17 11l5 5-5 5z" fill="#0d0" stroke="#050"/></svg></button>
      </div>
    </fieldset>

    <fieldset class="w-[67px] h-[79px] border border-[#c0c0c0] rounded-[3px] min-w-0">
      <legend class="ml-1.5 px-px leading-[14px] font-bold text-[#000080]">Таймеры</legend>
      <div class="flex flex-col gap-0.5 pl-[7px] pt-[3px]">
        <button class="w-[49px] h-7 border border-[#606060] bg-[#f4f4f4] flex items-center pl-[5px] gap-1.5" aria-label="Таймер пуска"><svg width="24" height="24" viewBox="0 0 24 24"><circle cx="13" cy="13" r="10" fill="#e8e8e8" stroke="#222"/><path d="M13 6v7l4-6" fill="none" stroke="#444" stroke-width="1.500"/><path d="M13 21v1M5 13h1M20 13h1" stroke="#444"/><path d="M1 6h5V3l6 5-6 5v-3H1z" fill="#3aa0a0" stroke="#033"/></svg><svg width="7" height="4" viewBox="0 0 7 4"><path d="M0 0h7L3.500 4z"/></svg></button>
        <button class="w-[49px] h-7 border border-[#606060] bg-[#f4f4f4] flex items-center pl-[5px] gap-1.5" aria-label="Таймер остановки"><svg width="24" height="24" viewBox="0 0 24 24"><circle cx="12" cy="12" r="10" fill="#e8e8e8" stroke="#222"/><path d="M12 5v7l4-6" fill="none" stroke="#444" stroke-width="1.500"/><path d="M4 12h1M12 20v1" stroke="#444"/><path d="M12 15h5v-3l6 5-6 6v-3h-5z" fill="#e838b8" stroke="#303"/></svg><svg width="7" height="4" viewBox="0 0 7 4"><path d="M0 0h7L3.500 4z"/></svg></button>
      </div>
    </fieldset>
  </div>
</section>

<!-- status bar -->
<div class="flex gap-[3px] h-[19px] pt-0.5 font-['Roboto',sans-serif] text-[11px] leading-4">
  <span class="w-[189px] border-l border-t border-[#a0a0a0] pl-[3px] whitespace-nowrap">USB Осциллограф не подключен</span>
  <span class="flex-1 border-l border-t border-[#a0a0a0]"></span>
  <span class="w-[48px] border-l border-t border-[#a0a0a0] pl-[2px]">1.8</span>
</div>

<!-- taskbar -->
<footer class="flex items-stretch h-10 bg-[linear-gradient(100deg,#060906_0%,#050505_45%,#1c1c1e_55%,#0a0a0c_62%,#060608_100%)] text-white font-['Open_Sans',sans-serif]">
  <button class="w-[49px] grid place-items-center" aria-label="Пуск"><svg width="16" height="16" viewBox="0 0 16 16" fill="#fff"><path d="M0 2l7-1v6.500H0zM8 1l8-1v7.500H8zM0 8.500h7V15l-7-1zM8 8.500h8V16l-8-1z"/></svg></button>
  <button class="w-[48px] grid place-items-center" aria-label="Поиск"><svg width="18" height="18" viewBox="0 0 18 18" fill="none" stroke="#fff" stroke-width="1.500"><circle cx="11" cy="6.500" r="5"/><path d="M7.500 10L1 16.500"/></svg></button>
  <button class="w-[48px] grid place-items-center" aria-label="Представление задач"><svg width="20" height="16" viewBox="0 0 20 16" fill="none" stroke="#fff" stroke-width="1.200"><path d="M4.500 1.500h11v13h-11zM3 2.500H.8v11H3M17 2.500h2.200v11H17"/></svg></button>
  <button class="w-[51px] grid place-items-center" aria-label="Проводник"><svg width="22" height="20" viewBox="0 0 22 20"><path d="M0 1h8l2 2h11v14H0z" fill="#f5cf62"/><path d="M0 5h21v13H0z" fill="#ffe08a"/><path d="M3 19v-9h15v9h-4v-4H7v4z" fill="#2da4e0"/></svg></button>
  <button class="w-[49px] grid place-items-center" aria-label="Диагностика"><svg width="24" height="24" viewBox="0 0 24 24"><circle cx="12" cy="12" r="12" fill="#1010d8"/><path d="M14 1q9 3 9 13l-7-4z" fill="#7080ff"/><path d="M4 6h4v3H4zM4 12h4v4H4zM16 10h4v4h-4z" fill="#20c8f0"/><path d="M4 9h4v3H4zM16 6h4v3h-4zM16 15h4v4h-4z" fill="#f0b020"/><path d="M10 10h4v4h-4z" fill="#e8e8ff"/><path d="M11 6l3-1 2 2" fill="none" stroke="#f03020" stroke-width="2"/></svg></button>
  <button class="w-[49px] grid place-items-center" aria-label="Адаптер"><svg width="26" height="24" viewBox="0 0 26 24"><path d="M2 9l7-6 15-1v5l2 2-5 4-13 1-6-1z" fill="#f2a81c"/><path d="M9 3l15-1-4 5-14 1z" fill="#ffd24a"/><path d="M7 13l-4 8M11 13l-3 9M15 13l1 7-4 3M7 14q6 2 3 6" fill="none" stroke="#d08020" stroke-width="1.500"/></svg></button>
  <button class="w-[49px] grid place-items-center" aria-label="360"><svg width="24" height="24" viewBox="0 0 24 24"><circle cx="12" cy="12" r="12" fill="#f7d81c"/><path d="M2 18Q-3 6 8 1q8-3 14 5-8-4-13 0t-7 12z" fill="#58b82c"/><path d="M12 7v10M7 12h10" stroke="#2c9a1c" stroke-width="4"/></svg></button>
  <button class="w-[49px] grid place-items-center" aria-label="Прибор"><svg width="22" height="20" viewBox="0 0 22 20"><path d="M1 1h4v2h12V1h4v18h-4v-2H5v2H1z" fill="#888"/><path d="M6 4h10v12H6z" fill="#4a4d4a"/><path d="M10 9h2v2h-2z" fill="#0f0"/><path d="M3 2v16M19 2v16" stroke="#555"/></svg></button>
  <button class="w-[49px] grid place-items-center" aria-label="DiSco"><svg width="26" height="24" viewBox="0 0 26 24"><ellipse cx="12" cy="12" rx="11" ry="6" fill="#e8b020"/><path d="M1 6l3-3 2 5 3-4 2 4 3-5 2 6 3-5 3 4M16 4v16M20 8v12" fill="none" stroke="#8fa8e0" stroke-width="1.500"/><path d="M3 13h18" stroke="#fff6c0" stroke-width="2"/></svg></button>
  <button class="w-[48px] pt-[2px] grid place-items-center bg-[#3b3d3b] border-b-2 border-[#76b9ed]" aria-label="Diamag"><svg width="24" height="24" viewBox="0 0 24 24"><rect x=".5" y=".5" width="23" height="23" rx="3" fill="#122a86" stroke="#b8c8f0"/><path d="M2 12h4l1-4 2 8 2-13 2 17 2-12 2 8 1-4h5" fill="none" stroke="#fff" stroke-width="1.600"/></svg></button>
  <button class="w-[49px] grid place-items-center" aria-label="Осциллограф"><svg width="24" height="24" viewBox="0 0 24 24"><path d="M1 1h22v20H1z" fill="#5a6470"/><path d="M3 3h18v14H3z" fill="#06302c"/><path d="M4 6h5v7h5V6h6M4 13q4-10 8-2t8-4" fill="none" stroke="#18b898"/><path d="M3 19h18" stroke="#aab" stroke-dasharray="2 1"/><path d="M4 22h3M17 22h3" stroke="#888" stroke-width="2"/></svg></button>
  <button class="w-10 mx-[5px] pt-[2px] grid place-items-center border-b-2 border-[#76b9ed]" aria-label="Opera"><svg width="24" height="24" viewBox="0 0 24 24"><path fill-rule="evenodd" d="M12 1a11 11 0 100 22 11 11 0 000-22zm0 3c3 0 4.500 4 4.500 8s-1.500 8-4.500 8-4.500-4-4.500-8S9 4 12 4z" fill="#e0202c"/></svg></button>
  <button class="w-10 mx-1 pt-[2px] grid place-items-center border-b-2 border-[#76b9ed]" aria-label="Справка"><svg width="20" height="22" viewBox="0 0 20 22"><path d="M2 7h9v14H2z" fill="#eee"/><path d="M4 11h5M4 14h5M4 17h5" stroke="#888"/><path d="M9 5q0-4 4-4t4 4-4 5v4" fill="none" stroke="#f4e000" stroke-width="3"/><circle cx="13" cy="17" r="1.800" fill="#f4e000"/></svg></button>
  <button class="w-10 mx-[5px] pt-[2px] grid place-items-center border-b-2 border-[#76b9ed]" aria-label="Диагностика (окно)"><svg width="24" height="24" viewBox="0 0 24 24"><circle cx="12" cy="12" r="12" fill="#1010d8"/><path d="M14 1q9 3 9 13l-7-4z" fill="#7080ff"/><path d="M4 6h4v3H4zM4 12h4v4H4zM16 10h4v4h-4z" fill="#20c8f0"/><path d="M4 9h4v3H4zM16 6h4v3h-4zM16 15h4v4h-4z" fill="#f0b020"/><path d="M10 10h4v4h-4z" fill="#e8e8ff"/><path d="M11 6l3-1 2 2" fill="none" stroke="#f03020" stroke-width="2"/></svg></button>
  <div class="ml-auto flex items-center">
    <button class="w-6 grid place-items-center" aria-label="Скрытые значки"><svg width="12" height="7" viewBox="0 0 12 7"><path d="M.5 6.500L6 1l5.500 5.500" fill="none" stroke="#fff" stroke-width="1.200"/></svg></button>
    <button class="w-6 grid place-items-center" aria-label="Батарея"><svg width="17" height="13" viewBox="0 0 17 13"><path d="M5.500 3.500h9v7h-9zM15 5.500h1.500v3H15z" fill="#fff" stroke="#fff"/><path d="M1 0v2M4 0v2M.5 2.500h4v2l-2 1.500v5h3" fill="none" stroke="#fff"/></svg></button>
    <button class="w-6 ml-0.5 grid place-items-center" aria-label="Сеть"><svg width="14" height="14" viewBox="0 0 14 14" fill="none" stroke="#fff" stroke-width="1.200"><path d="M1 13Q1 2 13 1M4.500 13Q5 6 13 5M8 13q0-4 5-4.500" /><circle cx="12" cy="12.500" r=".8"/></svg></button>
    <button class="w-6 grid place-items-center" aria-label="Звук"><svg width="17" height="14" viewBox="0 0 17 14" fill="none" stroke="#fff"><path d="M.5 4.500h3l4-4v13l-4-4h-3zM10 4.500q1.500 2.500 0 5M12 2.500q3 4.500 0 9M14.500 1q3.500 6 0 12"/></svg></button>
    <button class="w-7 ml-0.5 grid place-items-center" aria-label="Перо"><svg width="17" height="16" viewBox="0 0 17 16" fill="none" stroke="#fff" stroke-width="1.200"><path d="M5 12l6-11 3 1-6 11-3 2zM5 8q-5 1-4 5t4 0M10 9h6l-3 3"/></svg></button>
    <button class="w-10 text-xs">РУС</button>
    <div class="w-[60px] mr-0.5 text-center text-[11px] leading-[18px]">23:54<br>03.09.2017</div>
    <button class="w-[42px] mr-3 grid place-items-center" aria-label="Уведомления"><svg width="17" height="16" viewBox="0 0 17 16"><path d="M.5.5h15v12H11L8 15.500 6 12.500H.5z" fill="none" stroke="#fff" stroke-width="1.200"/></svg></button>
  </div>
</footer>

<script>
const NS = 'http://www.w3.org/2000/svg';
const add = (id, tag, attrs, text) => {
  const e = document.createElementNS(NS, tag);
  for (const k in attrs) e.setAttribute(k, attrs[k]);
  if (text !== undefined) e.textContent = text;
  document.getElementById(id).appendChild(e);
};
const row = (y, label) => {
  const p = Math.round(y) + .5;
  add('grid', 'path', { d: `M35 ${p}h1229` });
  add('axis', 'path', { d: `M32 ${p}h3`, stroke: '#fff' });
  add('axis', 'text', { x: 30, y: p + 3, 'font-size': 9, 'text-anchor': 'end' }, label);
};
// pressure scale, bar
for (let i = 21; i >= -4; i--) {
  const v = i * 3 / 10;
  row(532 - i * 19.43, Number.isInteger(v) ? v : v.toFixed(2));
}
// synchronisation sensor scale, volts
for (let i = 5; i >= -1; i--) row(784 - i * 31, i ? (i * .02).toFixed(2) : 0);
// time scale, seconds
for (let i = 0; i < 9; i++) {
  const x = Math.round(160 + i * 125.5) + .5;
  add('grid', 'path', { d: `M${x} 109v727` });
  add('axis', 'path', { d: `M${x} 837v3`, stroke: '#fff' });
  add('axis', 'text', { x, y: 852, 'font-size': 12, 'text-anchor': 'middle' }, (.115 + i * .023).toFixed(3));
}
add('axis', 'text', { x: 1274, y: 852, 'font-size': 12 }, '0');
// crank angle ruler
for (let i = 0; i < 80; i++) {
  const x = Math.round(209 + i * 10.99) + .5, big = i % 5 === 0;
  if (i) add('ruler', 'path', { d: `M${x} 298v${big ? 5 : 4}M${x} 327v${big ? -5 : -3}`, stroke: big ? '#000' : '#808080' });
  if (big) add('ruler', 'text', { x: i ? x + 3 : 219, y: 318, 'font-size': 16, 'text-anchor': 'middle' }, i * 9 + '°');
}
// idle signal of the synchronisation sensor
let d = '', s = 7;
for (let x = 36; x < 1263; x++) {
  s = (s * 73 + 41) % 1009;
  const quiet = (x > 188 && x < 232) || (x > 1053 && x < 1085);
  const h = quiet ? 1 : s % 7 === 0 ? 2 : 3;
  d += `M${x + .5} ${784.5 - h}v${2 * h}`;
}
document.getElementById('noise').setAttribute('d', d);
</script>
</body>
</html>
